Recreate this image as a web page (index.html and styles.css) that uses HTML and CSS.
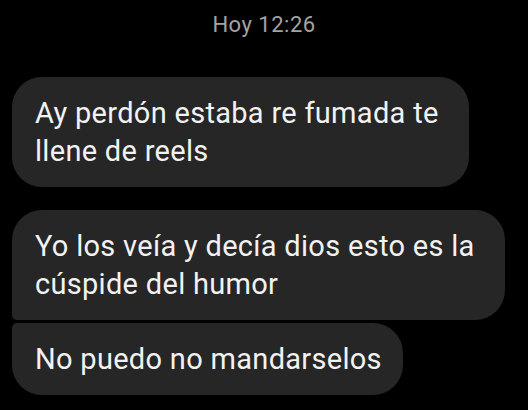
FILE: index.html
```html
<!DOCTYPE html>
<html lang="es">
<head>
    <meta charset="UTF-8">
    <meta name="viewport" content="width=device-width, initial-scale=1.0">
    <title>Mensajes</title>
    <link rel="stylesheet" href="styles.css">
</head>
<body>
    <div class="chat">
        <div class="stamp">Hoy 12:26</div>

        <div class="group">
            <div class="bubble multi">Ay perdón estaba re fumada te<br>llene de reels</div>
        </div>

        <div class="group">
            <div class="bubble multi first">Yo los veía y decía dios esto es la<br>cúspide del humor</div>
            <div class="bubble last">No puedo no mandarselos</div>
        </div>
    </div>
</body>
</html>
```

FILE: styles.css
```css
body {
    margin: 0;
    padding: 0;
    background-color: #000;
    font-family: Roboto, "Noto Sans", sans-serif;
}

.chat {
    display: flex;
    flex-direction: column;
    gap: 23px;
    padding: 11px 12px 0;
}

.stamp {
    text-align: center;
    color: #a3a3a3;
    font-size: 22px;
    letter-spacing: 0.5px;
    line-height: 28px;
    margin-bottom: 15px;
}

.group {
    display: flex;
    flex-direction: column;
    align-items: flex-start;
    gap: 3px;
}

.bubble {
    background-color: #262626;
    color: #f2f2f2;
    font-size: 29px;
    letter-spacing: 0.3px;
    line-height: 38px;
    padding: 17px 21px 17px 23px;
    border-radius: 30px;
    white-space: nowrap;
}

.bubble.multi {
    padding-right: 30px;
}

.bubble.first {
    border-bottom-left-radius: 5px;
}

.bubble.last {
    border-top-left-radius: 5px;
}
```
